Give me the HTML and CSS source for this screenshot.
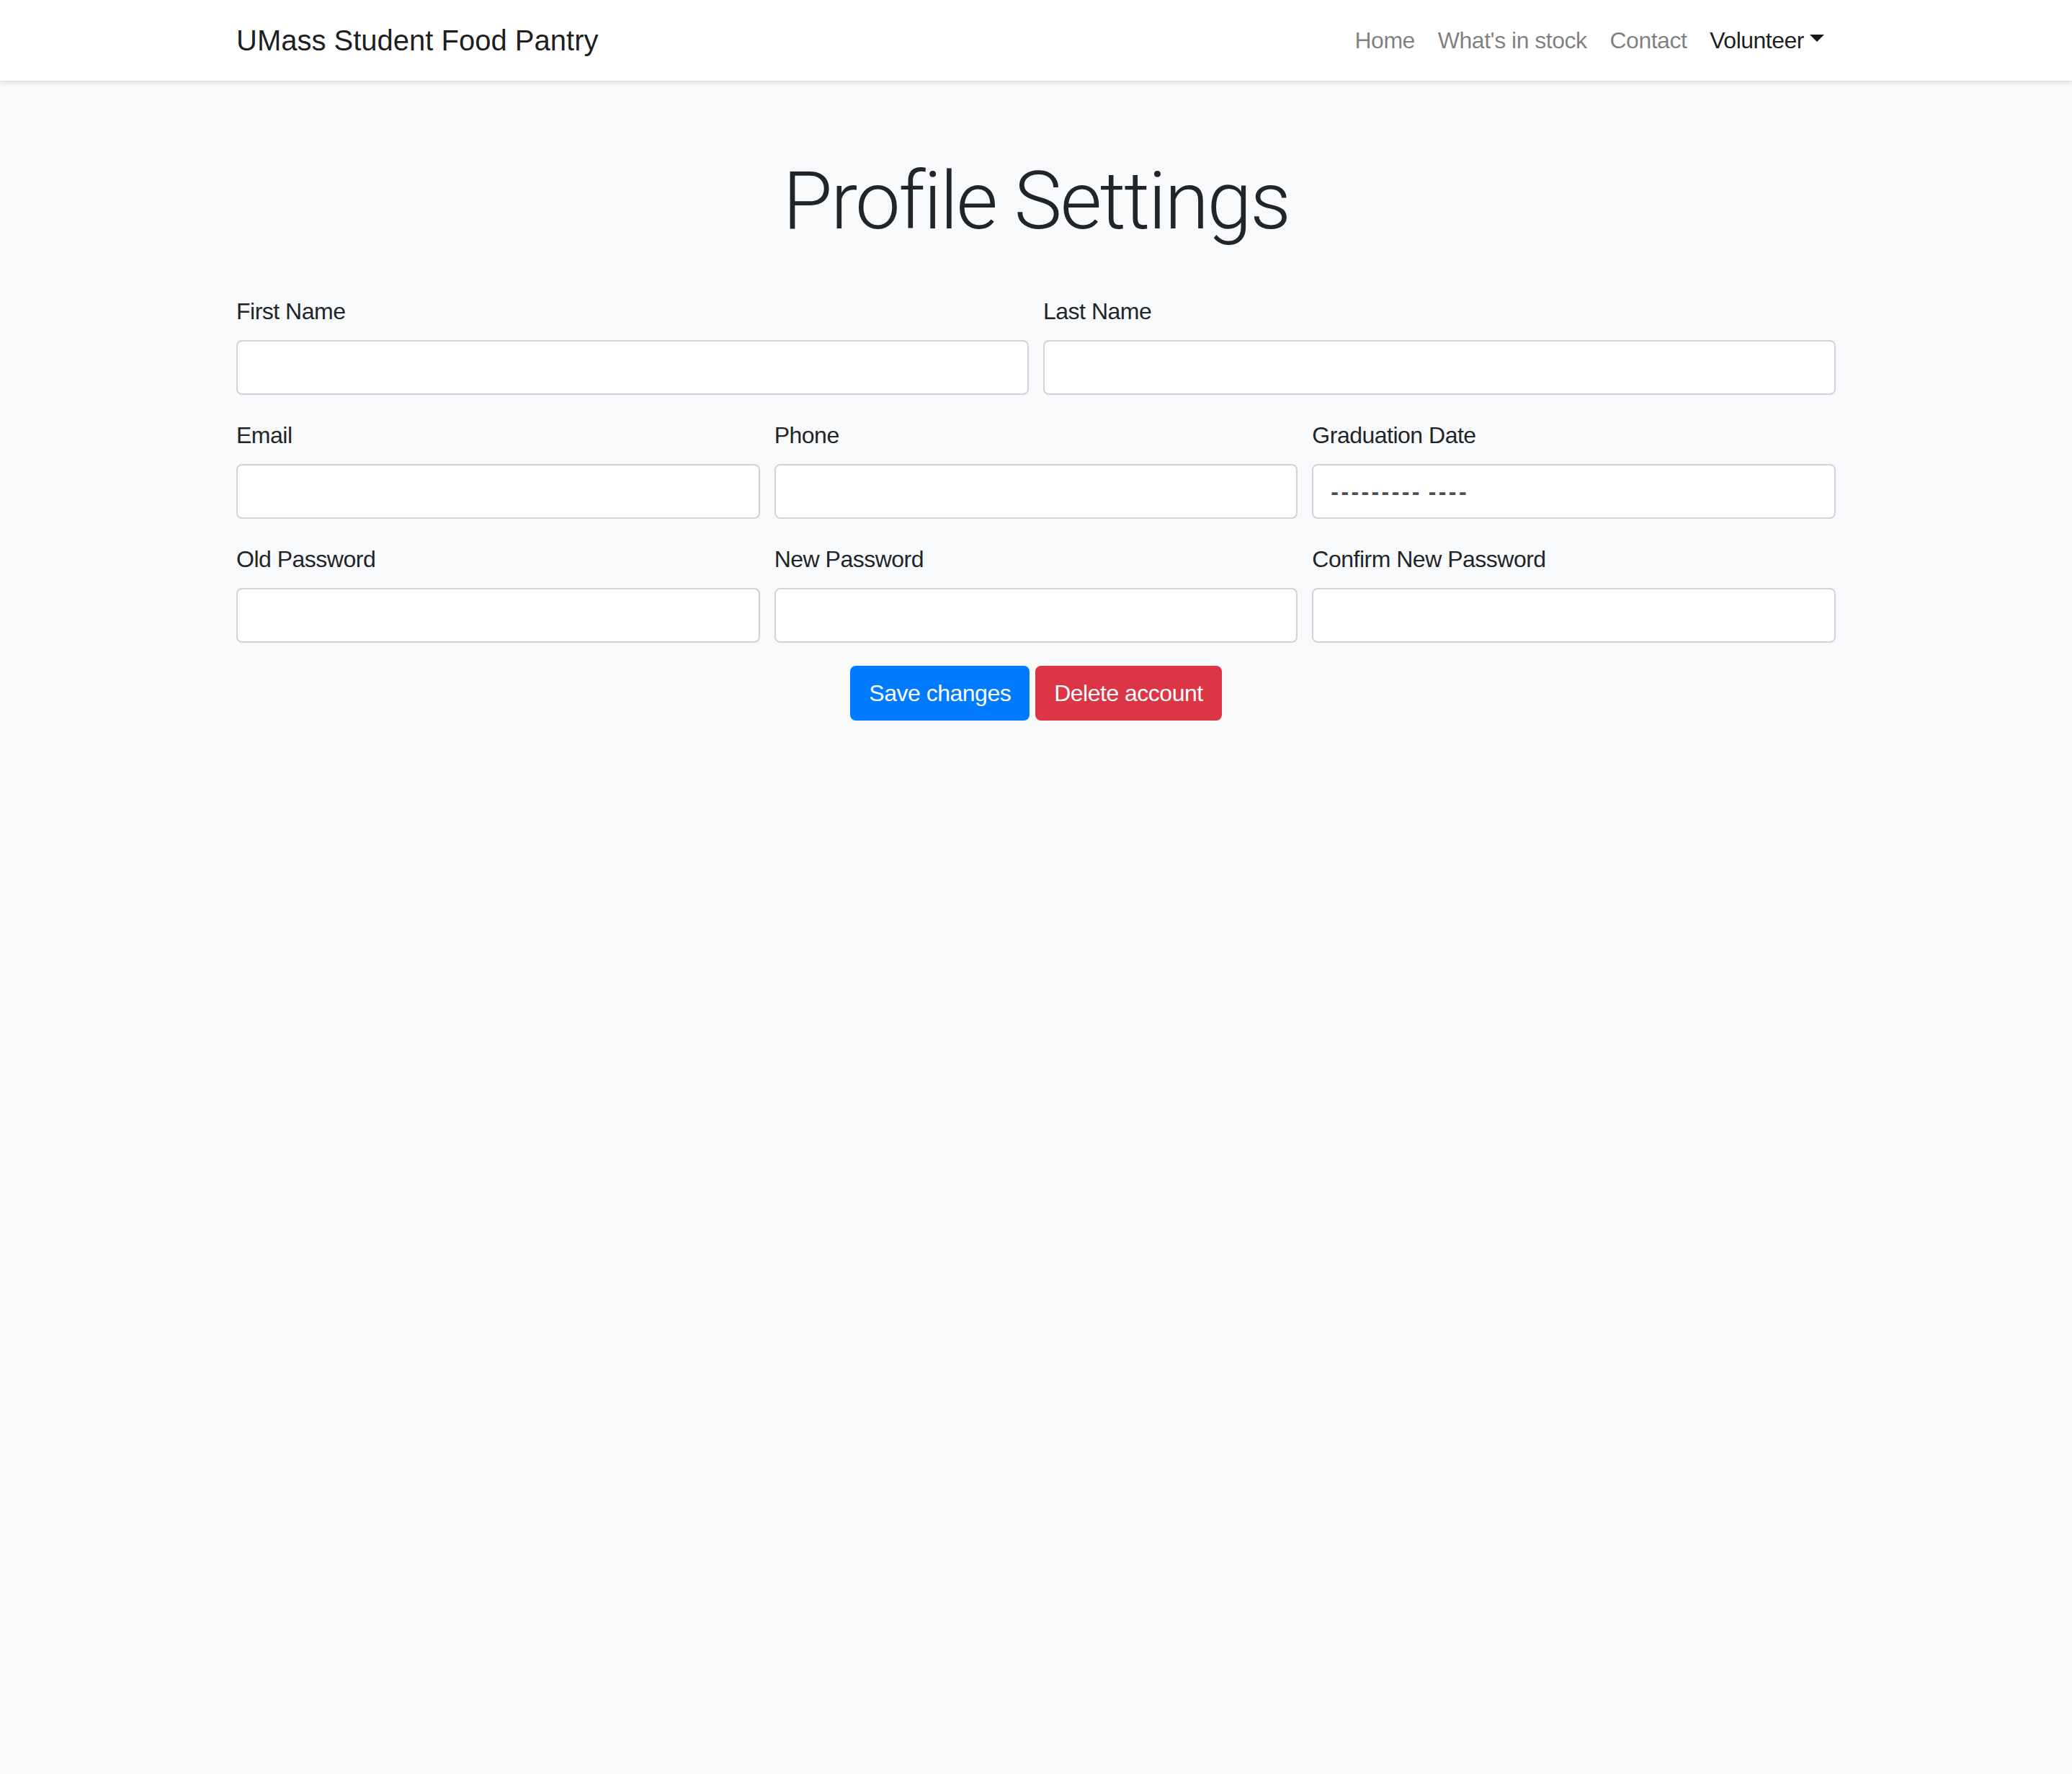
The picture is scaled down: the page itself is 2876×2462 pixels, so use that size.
FILE: index.html
```html
<!DOCTYPE html>
<html lang="en">
<head>
<meta charset="utf-8">
<title>Profile Settings - UMass Student Food Pantry</title>
<link rel="stylesheet" href="styles.css">
</head>
<body>
<nav class="navbar">
  <div class="container nav-inner">
    <a class="brand" href="#">UMass Student Food Pantry</a>
    <ul class="nav-links">
      <li><a class="nav-link" href="#">Home</a></li>
      <li><a class="nav-link" href="#">What's in stock</a></li>
      <li><a class="nav-link" href="#">Contact</a></li>
      <li><a class="nav-link active dropdown" href="#">Volunteer<span class="caret"></span></a></li>
    </ul>
  </div>
</nav>
<main class="container">
  <h1 class="page-title">Profile Settings</h1>
  <form class="profile-form">
    <div class="form-row cols-2">
      <div class="form-group">
        <label class="label">First Name</label>
        <input class="field" type="text">
      </div>
      <div class="form-group">
        <label class="label">Last Name</label>
        <input class="field" type="text">
      </div>
    </div>
    <div class="form-row cols-3">
      <div class="form-group">
        <label class="label">Email</label>
        <input class="field" type="text">
      </div>
      <div class="form-group">
        <label class="label">Phone</label>
        <input class="field" type="text">
      </div>
      <div class="form-group">
        <label class="label">Graduation Date</label>
        <div class="field month-field"><span class="dashes">---------</span> <span class="dashes">----</span></div>
      </div>
    </div>
    <div class="form-row cols-3">
      <div class="form-group">
        <label class="label">Old Password</label>
        <input class="field" type="password">
      </div>
      <div class="form-group">
        <label class="label">New Password</label>
        <input class="field" type="password">
      </div>
      <div class="form-group">
        <label class="label">Confirm New Password</label>
        <input class="field" type="password">
      </div>
    </div>
    <div class="actions">
      <button class="btn btn-primary" type="button">Save changes</button>
      <button class="btn btn-danger" type="button">Delete account</button>
    </div>
  </form>
</main>
</body>
</html>
```

FILE: styles.css
```css
* { box-sizing: border-box; }

html {
  background: #f8f9fa;
}

html, body {
  margin: 0;
  padding: 0;
}

body {
  background: #f8f9fa;
  color: #212529;
  font-family: "Liberation Sans", Arial, sans-serif;
  font-size: 32px;
  line-height: 48px;
  letter-spacing: -0.5px;
}

.container {
  max-width: 2280px;
  margin: 0 auto;
  padding: 0 30px;
}

.navbar {
  background: #fff;
  padding: 16px 0;
  box-shadow: 0 1px 0 rgba(0, 0, 0, 0.06), 0 4px 8px rgba(0, 0, 0, 0.075);
  position: relative;
}

.nav-inner {
  display: flex;
  align-items: center;
  justify-content: space-between;
}

.brand {
  font-size: 40px;
  line-height: 60px;
  padding: 10px 0;
  color: rgba(0, 0, 0, 0.9);
  text-decoration: none;
  letter-spacing: 0;
}

.nav-links {
  display: flex;
  list-style: none;
  margin: 0;
  padding: 0;
}

.nav-link {
  display: flex;
  align-items: center;
  padding: 16px 16px;
  font-size: 32px;
  line-height: 48px;
  color: rgba(0, 0, 0, 0.5);
  text-decoration: none;
}

.nav-link.active {
  color: rgba(0, 0, 0, 0.9);
}

.caret {
  display: inline-block;
  width: 0;
  height: 0;
  margin-left: 8px;
  margin-top: -6px;
  border-top: 10px solid rgba(0, 0, 0, 0.9);
  border-left: 10px solid transparent;
  border-right: 10px solid transparent;
}

.page-title {
  font-family: Roboto, "Liberation Sans", sans-serif;
  font-weight: 300;
  font-size: 112px;
  line-height: 134px;
  letter-spacing: -2.5px;
  font-variant-ligatures: none;
  text-align: center;
  margin: 100px 0 62px;
  color: #212529;
}

.form-row {
  display: grid;
  column-gap: 20px;
}

.cols-2 { grid-template-columns: 1fr 1fr; }
.cols-3 { grid-template-columns: 1fr 1fr 1fr; }

.form-group {
  margin-bottom: 32px;
}

.label {
  display: block;
  margin-bottom: 16px;
  font-size: 32px;
  line-height: 48px;
  color: #212529;
}

.field {
  display: block;
  width: 100%;
  height: 76px;
  padding: 12px 24px;
  font-family: "Liberation Sans", Arial, sans-serif;
  font-size: 32px;
  line-height: 48px;
  color: #495057;
  background: #fff;
  border: 2px solid #ced4da;
  border-radius: 8px;
  outline: none;
}

.month-field {
  white-space: pre;
  letter-spacing: 0;
}

.dashes {
  letter-spacing: 3.4px;
  font-weight: bold;
}

.actions {
  display: flex;
  justify-content: center;
  gap: 8px;
}

.btn {
  font-family: "Liberation Sans", Arial, sans-serif;
  font-size: 32px;
  line-height: 48px;
  letter-spacing: -0.5px;
  padding: 12px 24px;
  border: 2px solid transparent;
  border-radius: 8px;
  color: #fff;
  cursor: pointer;
}

.btn-primary {
  background: #007bff;
  border-color: #007bff;
}

.btn-danger {
  background: #dc3545;
  border-color: #dc3545;
}
```
